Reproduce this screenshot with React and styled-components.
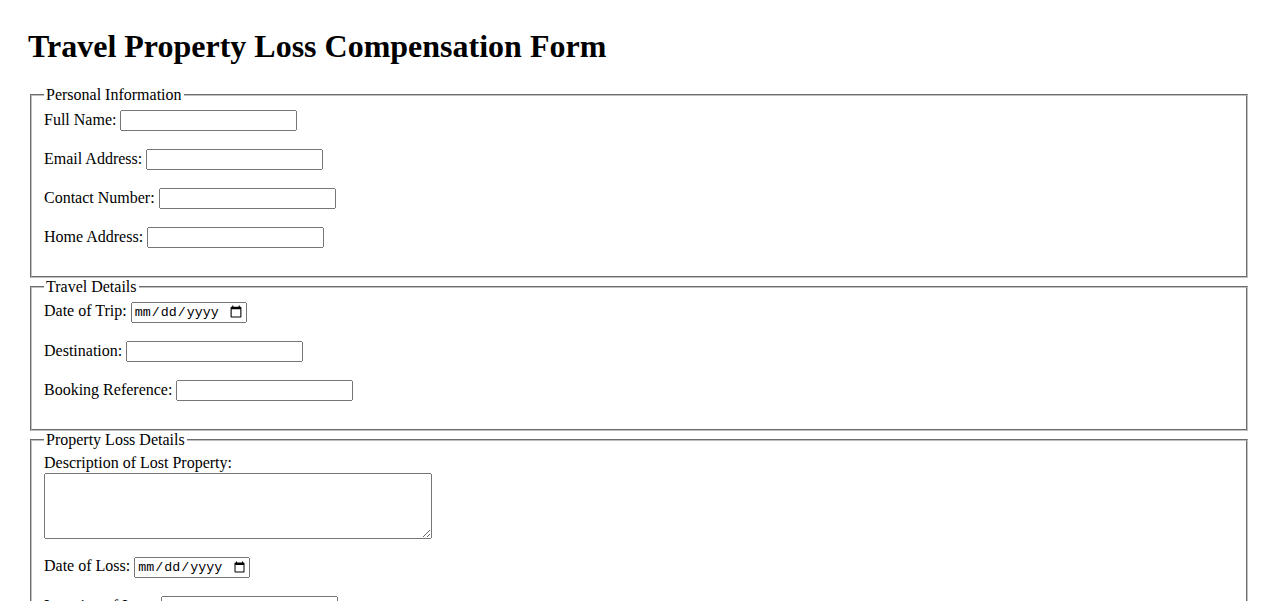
import React from 'react';
import styled, { createGlobalStyle } from 'styled-components';

const GlobalStyle = createGlobalStyle`
  body {
    margin: 8px;
    font-family: 'Liberation Serif', 'Times New Roman', serif;
    font-size: 16px;
    color: #000;
    background: #fff;
  }
`;

const Page = styled.div`
  padding: 20px;
`;

const Title = styled.h1`
  margin: 0 0 21.44px;
  font-size: 32px;
  font-weight: bold;
`;

const Section = styled.fieldset`
  margin: 0 2px;
  padding: 0.35em 0.75em 0.625em;
  border: 2px groove rgb(192, 192, 192);
`;

const Legend = styled.legend`
  padding: 0 2px;
`;

const Row = styled.div`
  margin-bottom: 18px;
`;

const Label = styled.label`
  display: ${p => (p.$block ? 'block' : 'inline')};
`;

const Field = styled.input`
  box-sizing: border-box;
  width: ${p => (p.type === 'date' ? '116px' : '177px')};
  height: 21px;
  margin: 0 0 0 4px;
  font-family: ${p => (p.type === 'date' ? "'Liberation Mono', 'DejaVu Sans Mono', monospace" : "'Liberation Sans', Arial, sans-serif")};
  font-size: 13.333px;
`;

const Notes = styled.textarea`
  display: block;
  box-sizing: border-box;
  width: 388px;
  height: 66px;
  margin: 1px 0 0;
`;

const fields = {
  personal: [
    ['fullName', 'Full Name:', 'text'],
    ['email', 'Email Address:', 'email'],
    ['phone', 'Contact Number:', 'tel'],
    ['address', 'Home Address:', 'text'],
  ],
  travel: [
    ['tripDate', 'Date of Trip:', 'date'],
    ['destination', 'Destination:', 'text'],
    ['booking', 'Booking Reference:', 'text'],
  ],
};

const InputRow = ({ id, label, type }) => (
  <Row>
    <Label htmlFor={id}>{label}</Label>
    <Field id={id} name={id} type={type} />
  </Row>
);

export default function App() {
  return (
    <>
      <GlobalStyle />
      <Page>
        <Title>Travel Property Loss Compensation Form</Title>
        <form>
          <Section>
            <Legend>Personal Information</Legend>
            {fields.personal.map(([id, label, type]) => (
              <InputRow key={id} id={id} label={label} type={type} />
            ))}
          </Section>
          <Section>
            <Legend>Travel Details</Legend>
            {fields.travel.map(([id, label, type]) => (
              <InputRow key={id} id={id} label={label} type={type} />
            ))}
          </Section>
          <Section>
            <Legend>Property Loss Details</Legend>
            <Row>
              <Label $block htmlFor="description">Description of Lost Property:</Label>
              <Notes id="description" name="description" />
            </Row>
            <InputRow id="lossDate" label="Date of Loss:" type="date" />
            <InputRow id="lossLocation" label="Location of Loss:" type="text" />
            <InputRow id="value" label="Estimated Value:" type="number" />
          </Section>
        </form>
      </Page>
    </>
  );
}
